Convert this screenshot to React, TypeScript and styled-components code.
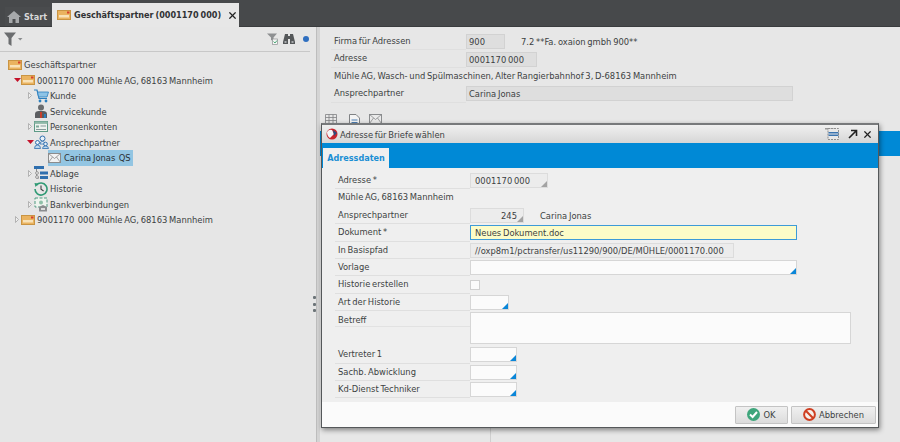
import React from "react";
import styled, { createGlobalStyle } from "styled-components";
import { X } from "lucide-react";

const GlobalStyle = createGlobalStyle`
  html, body {
    margin: 0;
    padding: 0;
    width: 900px;
    height: 442px;
    overflow: hidden;
  }
  body {
    font-family: "DejaVu Sans", "Liberation Sans", sans-serif;
    font-stretch: condensed;
    font-size: 9.3px;
    word-spacing: -0.9px;
    color: #3c3f42;
  }
`;

const Page = styled.div`
  position: relative;
  width: 900px;
  height: 442px;
  display: flex;
  flex-direction: column;
  background: #e7e7e7;
  overflow: hidden;
`;

const TabBar = styled.div`
  height: 27px;
  flex: none;
  display: flex;
  align-items: flex-end;
  gap: 2px;
  padding-left: 5px;
  background: #47494b;
  border-bottom: 1px solid #3a3c3e;
  box-sizing: border-box;
`;

const Tab = styled.div<{ $active?: boolean }>`
  height: ${(p) => (p.$active ? 24 : 19)}px;
  width: ${(p) => (p.$active ? 187 : 45)}px;
  margin-bottom: ${(p) => (p.$active ? -1 : 0)}px;
  display: flex;
  align-items: center;
  gap: 3px;
  box-sizing: border-box;
  padding-left: ${(p) => (p.$active ? 5 : 2)}px;
  font-size: 9px;
  font-weight: bold;
  white-space: nowrap;
  background: ${(p) => (p.$active ? "#e7e7e7" : "#4a4c4e")};
  color: ${(p) => (p.$active ? "#303234" : "#d8d8d8")};
`;

const Main = styled.div`
  flex: 1;
  display: flex;
  min-height: 0;
`;

const TreePanel = styled.div`
  width: 316px;
  flex: none;
  box-sizing: border-box;
  padding-right: 6px;
  background: #e6e6e6;
`;

const TreeToolbar = styled.div`
  height: 24px;
  display: flex;
  align-items: center;
  justify-content: space-between;
  padding: 0 1px 0 4px;
  border-bottom: 1px solid #c8c8c8;
`;

const ToolGroup = styled.div`
  display: flex;
  align-items: center;
  gap: 5px;
`;

const StatusDot = styled.span`
  width: 6px;
  height: 6px;
  margin-left: 3px;
  border-radius: 50%;
  background: #2f6fc0;
`;

const Tree = styled.div`
  padding-top: 5px;
`;

const TreeRow = styled.div<{ $indent: number }>`
  height: 15.5px;
  display: flex;
  align-items: center;
  padding-left: ${(p) => p.$indent}px;
  white-space: pre;
`;

const CaretSlot = styled.span`
  width: 8px;
  flex: none;
  display: flex;
  align-items: center;
  justify-content: center;
`;

const IconSlot = styled.span`
  width: 16px;
  flex: none;
  display: flex;
  align-items: center;
`;

const Selected = styled.span`
  width: 85px;
  height: 15.5px;
  display: flex;
  align-items: center;
  gap: 3px;
  background: #93c5e2;
  color: #2c3034;
`;

const Splitter = styled.div`
  position: relative;
  width: 4px;
  flex: none;
  box-sizing: border-box;
  background: #d4d4d4;
  border-left: 1px solid #bdbdbd;
`;

const GripStack = styled.div`
  position: absolute;
  left: -4px;
  top: 269px;
  display: flex;
  flex-direction: column;
  gap: 3.5px;
`;

const Grip = styled.i`
  width: 3px;
  height: 3px;
  border-radius: 1px;
  background: #6c7478;
`;

const Detail = styled.div`
  flex: 1;
  min-width: 0;
  padding-top: 6px;
`;

const DetailForm = styled.div`
  padding-left: 11px;
`;

const Row = styled.div<{ $plain?: boolean }>`
  height: 17.4px;
  display: flex;
  align-items: center;
  > label {
    width: 135px;
    height: 17.4px;
    line-height: 16px;
    flex: none;
    padding-left: 3px;
    box-sizing: border-box;
    white-space: nowrap;
    border-bottom: ${(p) => (p.$plain ? "none" : "1px solid #dfdfdf")};
  }
`;

const ReadField = styled.div<{ $width: number; $right?: boolean; $light?: boolean }>`
  position: relative;
  width: ${(p) => p.$width}px;
  height: 15px;
  line-height: 13px;
  flex: none;
  box-sizing: border-box;
  padding: 0 ${(p) => (p.$right ? 6 : 3)}px 0 ${(p) => (p.$light ? 4 : 2)}px;
  text-align: ${(p) => (p.$right ? "right" : "left")};
  background: ${(p) => (p.$light ? "#ececec" : "#dedede")};
  border: 1px solid ${(p) => (p.$light ? "#dcdcdc" : "#d2d2d2")};
`;

const FieldNote = styled.span`
  margin-left: 16px;
`;

const DetailIcons = styled.div`
  display: flex;
  gap: 9px;
  padding: 11px 0 0 5px;
  height: 16px;
`;

const GridHead = styled.div`
  margin-top: 1px;
  height: 25px;
  background: #0089d6;
`;

const GridBody = styled.div`
  height: 290px;
  margin-left: 170px;
  border-left: 1px solid #cfcfcf;
`;

const Dialog = styled.div`
  position: absolute;
  left: 321px;
  top: 123px;
  width: 558px;
  height: 305px;
  display: flex;
  flex-direction: column;
  box-sizing: border-box;
  background: #efefef;
  border: 1px solid #55585a;
  border-top: 2px solid #77797b;
  box-shadow: 1px 2px 5px rgba(0, 0, 0, 0.45);
`;

const DialogTitle = styled.div`
  height: 18px;
  flex: none;
  display: flex;
  align-items: center;
  padding: 0 5px 0 4px;
  gap: 2px;
  background: linear-gradient(#f0f0f0, #d6d6d6);
  > span {
    flex: 1;
  }
`;

const TitleActions = styled.div`
  display: flex;
  align-items: center;
  gap: 4px;
  > svg:first-child {
    margin-right: 5px;
  }
`;

const DialogTabs = styled.div`
  height: 25px;
  flex: none;
  display: flex;
  align-items: flex-end;
  padding-left: 1px;
  background: #0089d6;
`;

const DialogTab = styled.div`
  width: 66px;
  height: 20px;
  line-height: 20px;
  text-align: center;
  font-size: 9px;
  font-weight: bold;
  color: #1a8ed4;
  background: #efefef;
`;

const DialogForm = styled.div`
  flex: 1;
  padding: 4px 0 0 13px;
`;

const InputField = styled.div<{ $width: number; $bg?: string; $edge?: string }>`
  position: relative;
  width: ${(p) => p.$width}px;
  height: 15px;
  line-height: 13px;
  flex: none;
  box-sizing: border-box;
  padding: 0 4px;
  background: ${(p) => p.$bg || "#fbfbfb"};
  border: 1px solid ${(p) => p.$edge || "#d6d6d6"};
`;

const Corner = styled.span<{ $blue?: boolean }>`
  position: absolute;
  right: 0;
  bottom: 0;
  width: 0;
  height: 0;
  border-style: solid;
  border-width: 0 0 6px 6px;
  border-color: transparent transparent ${(p) => (p.$blue ? "#0a86d8" : "#a3a3a3")} transparent;
`;

const Check = styled.span`
  width: 8px;
  height: 8px;
  background: #fbfbfb;
  border: 1px solid #d0d0d0;
`;

const TextareaRow = styled.div`
  display: flex;
  height: 35px;
  padding-top: 1px;
  box-sizing: border-box;
`;

const TextareaLabel = styled.div`
  width: 135px;
  height: 15px;
  flex: none;
  padding: 1px 0 0 3px;
  line-height: 13px;
  box-sizing: border-box;
  border-bottom: 1px solid #e2e2e2;
`;

const Textarea = styled.div`
  width: 381px;
  height: 32px;
  box-sizing: border-box;
  background: #fbfbfb;
  border: 1px solid #d6d6d6;
`;

const DialogFooter = styled.div`
  height: 25px;
  flex: none;
  display: flex;
  justify-content: flex-end;
  align-items: center;
  gap: 3px;
  padding-right: 2px;
  background: #fbfbfb;
`;

const Button = styled.div<{ $width: number }>`
  width: ${(p) => p.$width}px;
  height: 18px;
  box-sizing: border-box;
  display: flex;
  align-items: center;
  justify-content: center;
  gap: 3px;
  background: linear-gradient(#f0f0f0, #dcdcdc);
  border: 1px solid #c4c4c4;
  border-radius: 1px;
`;

const Home = () => (
  <svg width="14" height="13" viewBox="0 0 14 13">
    <path d="M7 1 L14 7 H12 V13 H8.5 V9 H5.5 V13 H2 V7 H0 Z" fill="#a7a9ab" />
  </svg>
);

const Partner = () => (
  <svg width="14" height="10" viewBox="0 0 14 10">
    <rect x="0.5" y="0.5" width="13" height="9" fill="#eab35f" stroke="#c99443" />
    <rect x="2" y="5" width="10" height="2.5" fill="#f8e2b8" />
    <rect x="10" y="1.5" width="2.5" height="2" fill="#d8402c" />
  </svg>
);

const CaretOpen = () => (
  <svg width="7" height="4" viewBox="0 0 7 4">
    <path d="M0 0 H7 L3.5 4 Z" fill="#c4122a" />
  </svg>
);

const CaretClosed = () => (
  <svg width="4" height="7" viewBox="0 0 4 7">
    <path d="M0.5 0.5 L3.5 3.5 L0.5 6.5 Z" fill="#eeeeee" stroke="#a4a4a4" strokeWidth="0.8" />
  </svg>
);

const Funnel = () => (
  <svg width="19" height="14" viewBox="0 0 19 14">
    <path d="M0 0.5 H12 L7.5 6 V14 L4.5 12 V6 Z" fill="#6b6d6f" />
    <path d="M14 6 H18.5 L16.2 8.5 Z" fill="#8a8c8e" />
  </svg>
);

const FilterCheck = () => (
  <svg width="11" height="12" viewBox="0 0 11 12">
    <path d="M0 0.5 H10 L6.5 4.5 V8 L4 7 V4.5 Z" fill="#8e9092" />
    <rect x="5.5" y="6" width="5" height="5.5" fill="#f4f4f4" stroke="#8e9092" strokeWidth="0.7" />
    <path d="M6.5 8.5 L8 10 L10 7.5" stroke="#3aa36b" strokeWidth="0.9" fill="none" />
  </svg>
);

const Binoculars = () => (
  <svg width="12" height="12" viewBox="0 0 12 12">
    <path d="M2 1 H5 V3 H7 V1 H10 L12 9 V11 H7 V6 H5 V11 H0 V9 Z" fill="#55585a" />
    <rect x="1.5" y="8" width="2" height="2" fill="#a8aaac" />
    <rect x="8.5" y="8" width="2" height="2" fill="#a8aaac" />
  </svg>
);

const Cart = () => (
  <svg width="15" height="14" viewBox="0 0 15 14">
    <path d="M0 1 H3 L5 9.5 H13" stroke="#2c7fbe" strokeWidth="1.2" fill="none" />
    <path d="M3.5 3 H14.5 L13 8 H4.6 Z" fill="#8ec3e6" stroke="#2c7fbe" strokeWidth="0.8" />
    <circle cx="6" cy="12" r="1.4" fill="#2c7fbe" />
    <circle cx="12" cy="12" r="1.4" fill="#2c7fbe" />
  </svg>
);

const ServiceUser = () => (
  <svg width="14" height="14" viewBox="0 0 14 14">
    <circle cx="7" cy="3.5" r="3" fill="#6a6c6e" />
    <path d="M1 14 V10 Q1 7 5 7 H9 Q13 7 13 10 V14 Z" fill="#5b5d60" />
    <rect x="6" y="8" width="2" height="6" fill="#c8402c" />
    <rect x="10" y="10" width="2" height="4" fill="#2c7fbe" />
  </svg>
);

const Accounts = () => (
  <svg width="14" height="11" viewBox="0 0 14 11">
    <rect x="0.5" y="0.5" width="13" height="10" fill="#eef2ee" stroke="#5d9a86" />
    <rect x="0.5" y="0.5" width="13" height="2.4" fill="#8fb8a8" />
    <rect x="2" y="4.5" width="3" height="2" fill="#7fa99a" />
    <path d="M6.5 5 H12 M2 8.5 H12" stroke="#86989a" />
  </svg>
);

const Contacts = () => (
  <svg width="15" height="14" viewBox="0 0 15 14">
    <circle cx="8.5" cy="3.5" r="2.5" fill="#e8f0f8" stroke="#2f6fae" />
    <circle cx="3.5" cy="7.5" r="2" fill="#e8f0f8" stroke="#2f6fae" />
    <path d="M0.5 13.5 Q0.5 10 3.5 10 Q6.5 10 6.5 13.5 Z" fill="#bcd8ee" stroke="#2f6fae" strokeWidth="0.8" />
    <path d="M6 9 Q6 6.5 8.5 6.5 Q11 6.5 11 9 Z" fill="#e8f0f8" stroke="#2f6fae" strokeWidth="0.8" />
    <circle cx="11.5" cy="9" r="1.8" fill="#e8f0f8" stroke="#2f6fae" />
    <path d="M8.5 13.5 Q8.5 11 11.5 11 Q14.5 11 14.5 13.5 Z" fill="#bcd8ee" stroke="#2f6fae" strokeWidth="0.8" />
  </svg>
);

const Mail = ({ stroke = "#8c8c8c", fill = "#f2f2f2" }: { stroke?: string; fill?: string }) => (
  <svg width="13" height="10" viewBox="0 0 13 10">
    <rect x="0.5" y="0.5" width="12" height="9" fill={fill} stroke={stroke} />
    <path d="M0.5 0.5 L6.5 5.5 L12.5 0.5 M0.5 9.5 L4.5 4 M12.5 9.5 L8.5 4" stroke={stroke} fill="none" strokeWidth="0.8" />
  </svg>
);

const Filing = () => (
  <svg width="14" height="14" viewBox="0 0 14 14">
    <rect x="0" y="0" width="10" height="3" fill="#2f6fae" />
    <path d="M2.5 3 V12 H5" stroke="#8a8a8a" fill="none" />
    <circle cx="3" cy="7" r="1.4" fill="#f0f0f0" stroke="#777" strokeWidth="0.7" />
    <circle cx="3" cy="11" r="1.4" fill="#f0f0f0" stroke="#777" strokeWidth="0.7" />
    <rect x="6" y="5.5" width="8" height="3" fill="#2f6fae" />
    <rect x="6" y="10" width="8" height="3" fill="#2f6fae" />
  </svg>
);

const History = () => (
  <svg width="14" height="14" viewBox="0 0 14 14">
    <path d="M2.4 3.2 A6 6 0 1 1 1 7" stroke="#2f9a74" strokeWidth="1.6" fill="none" />
    <path d="M0.5 1 L4.6 1.4 L1.5 5 Z" fill="#2f9a74" />
    <path d="M7 3.5 V7.2 L9.6 9" stroke="#3c3f42" strokeWidth="1.1" fill="none" />
  </svg>
);

const Bank = () => (
  <svg width="15" height="15" viewBox="0 0 15 15">
    <rect x="1" y="1" width="12" height="9" fill="#eef4ee" stroke="#4f9a80" strokeDasharray="3 1.5" />
    <circle cx="7" cy="5.5" r="2" fill="#8fc0a8" />
    <path d="M5 14.5 V10 L9 8 L13 10 V14.5 Z" fill="#8b8d8f" />
    <rect x="7" y="11" width="4" height="2" fill="#dcdcdc" />
  </svg>
);

const Logo = () => (
  <svg width="12" height="12" viewBox="0 0 12 12">
    <circle cx="6" cy="6" r="5.5" fill="#c8242c" />
    <path d="M1 4 Q3 1 6 2 L8 6 L4 10 Q1 8 1 4 Z" fill="#f3f5f7" />
    <path d="M7 2 L11 5 L8 8 Z" fill="#2a4f80" />
  </svg>
);

const GridIcon = () => (
  <svg width="15" height="14" viewBox="0 0 15 14">
    <path d="M0.5 0.5 H11.5 V10 H0.5 Z M0.5 3.5 H11.5 M0.5 6.5 H11.5 M4 0.5 V10 M8 0.5 V10" stroke="#808284" fill="none" strokeWidth="0.8" />
    <rect x="5" y="9" width="10" height="5" fill="#3a74b0" />
    <path d="M6 11.5 H14" stroke="#dfe8f2" />
  </svg>
);

const DocIcon = () => (
  <svg width="11" height="14" viewBox="0 0 11 14">
    <path d="M0.5 0.5 H7 L10.5 4 V13.5 H0.5 Z" fill="#f4f4f4" stroke="#808284" />
    <path d="M2.5 6 H8.5 M2.5 8.5 H8.5 M2.5 11 H8.5" stroke="#4d7fb4" />
  </svg>
);

const ColumnsIcon = () => (
  <svg width="14" height="12" viewBox="0 0 14 12">
    <path d="M0 0.5 H10" stroke="#9a9a9a" strokeWidth="2" strokeDasharray="3 1" />
    <rect x="3" y="0.5" width="10.5" height="11" fill="#e8e8e8" stroke="#8e8e8e" strokeDasharray="2 1" />
    <rect x="3.5" y="4" width="10" height="1.5" fill="#3a74b0" />
    <rect x="3.5" y="6.5" width="10" height="1.5" fill="#3a74b0" />
  </svg>
);

const Expand = () => (
  <svg width="10" height="10" viewBox="0 0 10 10">
    <path d="M1 9 L8 2 M3 1.5 H8.5 V7" stroke="#222" strokeWidth="1.6" fill="none" />
  </svg>
);

const OkIcon = () => (
  <svg width="13" height="13" viewBox="0 0 13 13">
    <circle cx="6.5" cy="6.5" r="6.5" fill="#3fa67c" />
    <path d="M3 6.5 L5.6 9 L10 4" stroke="#fff" strokeWidth="2" fill="none" />
  </svg>
);

const CancelIcon = () => (
  <svg width="13" height="13" viewBox="0 0 13 13">
    <circle cx="6.5" cy="6.5" r="5.4" fill="#f6f0ea" stroke="#cf3f22" strokeWidth="2" />
    <path d="M2.8 2.8 L10.2 10.2" stroke="#cf3f22" strokeWidth="2" />
  </svg>
);

type Item = {
  indent: number;
  caret?: "open" | "closed";
  icon?: React.ReactNode;
  text: string;
};

const treeItems: Item[] = [
  { indent: -1, icon: <Partner />, text: "Geschäftspartner" },
  { indent: 13, caret: "open", icon: <Partner />, text: "0001170  000  Mühle AG, 68163 Mannheim" },
  { indent: 26, caret: "closed", icon: <Cart />, text: "Kunde" },
  { indent: 26, icon: <ServiceUser />, text: "Servicekunde" },
  { indent: 26, caret: "closed", icon: <Accounts />, text: "Personenkonten" },
  { indent: 26, caret: "open", icon: <Contacts />, text: "Ansprechpartner" },
  { indent: 48, text: "Carina Jonas  QS" },
  { indent: 26, caret: "closed", icon: <Filing />, text: "Ablage" },
  { indent: 26, icon: <History />, text: "Historie" },
  { indent: 26, caret: "closed", icon: <Bank />, text: "Bankverbindungen" },
  { indent: 13, caret: "closed", icon: <Partner />, text: "9001170  000  Mühle AG, 68163 Mannheim" },
];

const TreeLine = ({ indent, caret, icon, text }: Item) => (
  <TreeRow $indent={indent}>
    {icon ? (
      <>
        <CaretSlot>
          {caret === "open" && <CaretOpen />}
          {caret === "closed" && <CaretClosed />}
        </CaretSlot>
        <IconSlot>{icon}</IconSlot>
        {text}
      </>
    ) : (
      <Selected>
        <Mail />
        {text}
      </Selected>
    )}
  </TreeRow>
);

const FormRow = ({ label, children, plain }: { label: string; children?: React.ReactNode; plain?: boolean }) => (
  <Row $plain={plain}>
    <label>{label}</label>
    {children}
  </Row>
);

export default function App() {
  return (
    <Page>
      <GlobalStyle />
      <TabBar>
        <Tab>
          <Home />
          Start
        </Tab>
        <Tab $active>
          <Partner />
          Geschäftspartner (0001170 000)
          <X size={11} strokeWidth={2.6} color="#222" style={{ marginLeft: 3 }} />
        </Tab>
      </TabBar>
      <Main>
        <TreePanel>
          <TreeToolbar>
            <Funnel />
            <ToolGroup>
              <FilterCheck />
              <Binoculars />
              <StatusDot />
            </ToolGroup>
          </TreeToolbar>
          <Tree>
            {treeItems.map((item) => (
              <TreeLine key={item.text} {...item} />
            ))}
          </Tree>
        </TreePanel>
        <Splitter>
          <GripStack>
            <Grip />
            <Grip />
            <Grip />
          </GripStack>
        </Splitter>
        <Detail>
          <DetailForm>
            <FormRow label="Firma für Adressen">
              <ReadField $width={39}>900</ReadField>
              <FieldNote>7.2 **Fa. oxaion gmbh 900**</FieldNote>
            </FormRow>
            <FormRow label="Adresse">
              <ReadField $width={71}>0001170 000</ReadField>
            </FormRow>
            <FormRow label="Mühle AG, Wasch- und Spülmaschinen, Alter Rangierbahnhof 3, D-68163 Mannheim" plain />
            <FormRow label="Ansprechpartner">
              <ReadField $width={327}>Carina Jonas</ReadField>
            </FormRow>
          </DetailForm>
          <DetailIcons>
            <GridIcon />
            <DocIcon />
            <Mail stroke="#8a8c8e" fill="#eaeaea" />
          </DetailIcons>
          <GridHead />
          <GridBody />
        </Detail>
      </Main>
      <Dialog>
        <DialogTitle>
          <Logo />
          <span>Adresse für Briefe wählen</span>
          <TitleActions>
            <ColumnsIcon />
            <Expand />
            <X size={11} strokeWidth={2.6} color="#222" />
          </TitleActions>
        </DialogTitle>
        <DialogTabs>
          <DialogTab>Adressdaten</DialogTab>
        </DialogTabs>
        <DialogForm>
          <FormRow label="Adresse *">
            <ReadField $width={78} $light>
              0001170 000
              <Corner />
            </ReadField>
          </FormRow>
          <FormRow label="Mühle AG, 68163 Mannheim" plain />
          <FormRow label="Ansprechpartner">
            <ReadField $width={54} $right $light>
              245
              <Corner />
            </ReadField>
            <FieldNote>Carina Jonas</FieldNote>
          </FormRow>
          <FormRow label="Dokument *">
            <InputField $width={327} $bg="#fcfcc8" $edge="#3d9bd8">
              Neues Dokument.doc
            </InputField>
          </FormRow>
          <FormRow label="In Basispfad">
            <ReadField $width={264} $light>
              //oxp8m1/pctransfer/us11290/900/DE/MÜHLE/0001170.000
            </ReadField>
          </FormRow>
          <FormRow label="Vorlage">
            <InputField $width={327}>
              <Corner $blue />
            </InputField>
          </FormRow>
          <FormRow label="Historie erstellen">
            <Check />
          </FormRow>
          <FormRow label="Art der Historie">
            <InputField $width={39}>
              <Corner $blue />
            </InputField>
          </FormRow>
          <TextareaRow>
            <TextareaLabel>Betreff</TextareaLabel>
            <Textarea />
          </TextareaRow>
          <FormRow label="Vertreter 1">
            <InputField $width={47}>
              <Corner $blue />
            </InputField>
          </FormRow>
          <FormRow label="Sachb. Abwicklung">
            <InputField $width={47}>
              <Corner $blue />
            </InputField>
          </FormRow>
          <FormRow label="Kd-Dienst Techniker">
            <InputField $width={47}>
              <Corner $blue />
            </InputField>
          </FormRow>
        </DialogForm>
        <DialogFooter>
          <Button $width={53}>
            <OkIcon />
            OK
          </Button>
          <Button $width={85}>
            <CancelIcon />
            Abbrechen
          </Button>
        </DialogFooter>
      </Dialog>
    </Page>
  );
}
